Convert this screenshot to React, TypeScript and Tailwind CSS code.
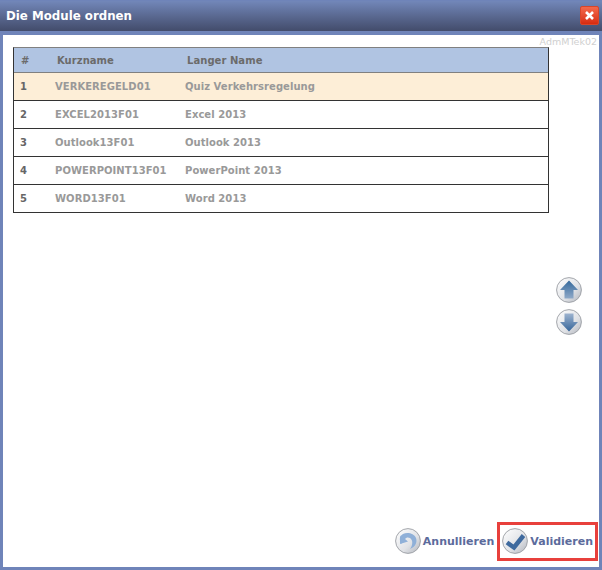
const rows = [
  ["1", "VERKEREGELD01", "Quiz Verkehrsregelung"],
  ["2", "EXCEL2013F01", "Excel 2013"],
  ["3", "Outlook13F01", "Outlook 2013"],
  ["4", "POWERPOINT13F01", "PowerPoint 2013"],
  ["5", "WORD13F01", "Word 2013"],
];

function RoundIcon({ size, children }: { size: number; children: React.ReactNode }) {
  return (
    <svg width={size} height={size} viewBox="0 0 26 26" className="shrink-0">
      <defs>
        <linearGradient id="rg" x1="0" y1="0" x2="1" y2="1">
          <stop offset="0" stopColor="#ffffff" />
          <stop offset="0.6" stopColor="#e0e2e6" />
          <stop offset="1" stopColor="#b0b4bc" />
        </linearGradient>
        <linearGradient id="bl" x1="0" y1="0" x2="0" y2="1">
          <stop offset="0" stopColor="#35699c" />
          <stop offset="1" stopColor="#8fa9c8" />
        </linearGradient>
        <linearGradient id="bd" x1="0" y1="0" x2="0" y2="1">
          <stop offset="0" stopColor="#9db3cf" />
          <stop offset="1" stopColor="#35659a" />
        </linearGradient>
      </defs>
      <circle cx="13" cy="13" r="12.4" fill="url(#rg)" stroke="#9a9da3" strokeWidth="0.9" />
      {children}
    </svg>
  );
}

export default function App() {
  return (
    <div className="w-[602px] h-[570px] bg-[#6f84b9] flex flex-col font-['DejaVu_Sans',Verdana,sans-serif]">
      <div className="h-[30px] mt-px shrink-0 flex items-center justify-between pl-[6px] pr-[3px] bg-gradient-to-b from-[#7287b9] to-[#434c6b]">
        <span className="text-[11.8px] font-bold text-white leading-none mt-[2px]">Die Module ordnen</span>
        <div className="w-[19px] h-[19px] rounded-[2px] bg-gradient-to-b from-[#f4684a] to-[#d62a0e] border border-[#d8462a] flex items-center justify-center mb-[2px]">
          <svg width="11" height="11" viewBox="0 0 11 11">
            <path d="M2 2 L9 9 M9 2 L2 9" stroke="#fff" strokeWidth="2.6" />
          </svg>
        </div>
      </div>
      <div className="mt-[4px] mx-[3px] h-[532px] bg-white relative flex flex-col">
        <div className="absolute top-[1px] right-[2px] text-[9.5px] leading-[12px] text-[#d0d0d0]">AdmMTek02</div>
        <div className="mt-[12px] ml-[10px] w-[536px] border border-[#333] border-t-[#808080] text-[10px] tracking-[0.05px] font-bold text-[#999]">
          <div className="h-[25px] bg-[#b0c4e2] flex items-center border-b border-[#808080] text-[#6b6b6b]">
            <span className="w-[43px] pl-[7px]">#</span>
            <span className="w-[130px]">Kurzname</span>
            <span>Langer Name</span>
          </div>
          {rows.map((r, i) => (
            <div key={r[0]} className={`flex items-center ${i === 0 ? "bg-[#fdeed7]" : "bg-white"} ${i < 4 ? "h-[28px] border-b border-[#333]" : "h-[27px]"}`}>
              <span className="w-[41px] pl-[6px] text-[#666]">{r[0]}</span>
              <span className="w-[130px]">{r[1]}</span>
              <span>{r[2]}</span>
            </div>
          ))}
        </div>
        <div className="absolute left-[553px] top-[242px] flex flex-col gap-[6px]">
          <RoundIcon size={26}>
            <path d="M13 3.5 L22 13 H17.5 V21.5 H8.5 V13 H4 Z" fill="url(#bl)" />
          </RoundIcon>
          <RoundIcon size={26}>
            <path d="M13 22.5 L22 13 H17.5 V4.5 H8.5 V13 H4 Z" fill="url(#bd)" />
          </RoundIcon>
        </div>
        <div className="absolute bottom-[12px] right-[3px] flex items-center text-[11px] font-bold text-[#5c6b9c] h-[28px]">
          <div className="flex items-center gap-[2px] mr-[8px]">
            <RoundIcon size={26}>
              <path d="M7 16 C4 13 4 8 8 6 C12 4 19 5 21 10 C22.5 14 20.5 19 15 21 C18 17 18 12 15 10 C13 9 11 9.5 10 11 L13 13.5 L5 16 L5 7 Z" fill="#8fb0d8" />
            </RoundIcon>
            <span className="whitespace-nowrap mt-[2px]">Annullieren</span>
          </div>
          <div className="flex items-center gap-[2px] pr-[3px]">
            <RoundIcon size={26}>
              <path d="M5 14.5 L12 19.5 L21.5 7.5" fill="none" stroke="#3f6a9e" strokeWidth="4.5" />
            </RoundIcon>
            <span className="whitespace-nowrap mt-[2px]">Validieren</span>
          </div>
          <div className="absolute right-[-2px] top-[-5px] w-[101px] h-[39px] border-[3px] border-[#e8403c] pointer-events-none" />
        </div>
      </div>
    </div>
  );
}
